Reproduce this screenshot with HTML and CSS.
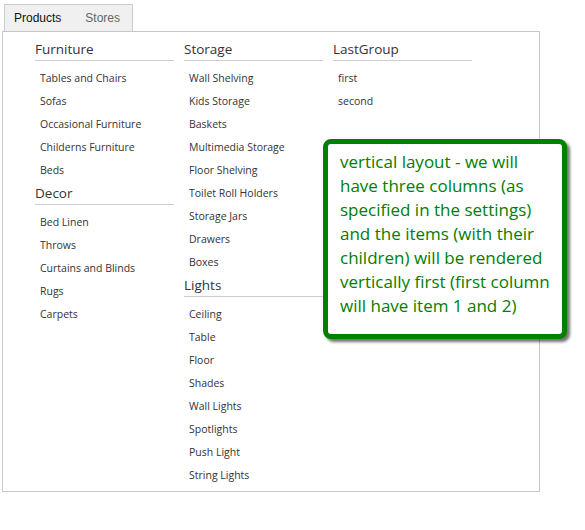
FILE: index.html
```html
<!DOCTYPE html>
<html>
<head>
<meta charset="utf-8">
<link rel="stylesheet" href="styles.css">
</head>
<body>
<div class="page">
  <div class="tabs">
    <div class="tab tab-first active">Products</div>
    <div class="tab-sep"></div>
    <div class="tab">Stores</div>
  </div>
  <div class="panel">
    <div class="col">
      <div class="group">
        <h3 class="group-title">Furniture</h3>
        <ul class="items">
          <li>Tables and Chairs</li>
          <li>Sofas</li>
          <li>Occasional Furniture</li>
          <li>Childerns Furniture</li>
          <li>Beds</li>
        </ul>
      </div>
      <div class="group">
        <h3 class="group-title">Decor</h3>
        <ul class="items">
          <li>Bed Linen</li>
          <li>Throws</li>
          <li>Curtains and Blinds</li>
          <li>Rugs</li>
          <li>Carpets</li>
        </ul>
      </div>
    </div>
    <div class="col">
      <div class="group">
        <h3 class="group-title">Storage</h3>
        <ul class="items">
          <li>Wall Shelving</li>
          <li>Kids Storage</li>
          <li>Baskets</li>
          <li>Multimedia Storage</li>
          <li>Floor Shelving</li>
          <li>Toilet Roll Holders</li>
          <li>Storage Jars</li>
          <li>Drawers</li>
          <li>Boxes</li>
        </ul>
      </div>
      <div class="group">
        <h3 class="group-title">Lights</h3>
        <ul class="items">
          <li>Ceiling</li>
          <li>Table</li>
          <li>Floor</li>
          <li>Shades</li>
          <li>Wall Lights</li>
          <li>Spotlights</li>
          <li>Push Light</li>
          <li>String Lights</li>
        </ul>
      </div>
    </div>
    <div class="col">
      <div class="group">
        <h3 class="group-title">LastGroup</h3>
        <ul class="items">
          <li>first</li>
          <li>second</li>
        </ul>
      </div>
    </div>
  </div>
  <div class="callout">vertical layout - we will<br>have three columns (as<br>specified in the settings)<br>and the items (with their<br>children) will be rendered<br>vertically first (first column<br>will have item 1 and 2)</div>
</div>
</body>
</html>
```

FILE: styles.css
```css
html, body {
  margin: 0;
  padding: 0;
  background: #ffffff;
}

.page {
  position: relative;
  padding: 4px 0 0 2px;
  width: 538px;
}

.tabs {
  display: flex;
  align-items: center;
  margin-left: 2px;
  width: 127px;
  height: 26px;
  background: #f0f0f0;
  border: 1px solid #cccccc;
  border-bottom: none;
  font-family: "Liberation Sans", Arial, sans-serif;
  font-size: 12px;
}

.tab {
  padding: 0 12px 0 13px;
  color: #666666;
  line-height: 26px;
}

.tab-first {
  padding: 0 11px 0 9px;
}

.tab.active {
  color: #111111;
}

.tab-sep {
  width: 1px;
  height: 19px;
  background: #cfcfcf;
}

.panel {
  display: flex;
  gap: 10px;
  border: 1px solid #c6c6c6;
  padding: 8px 0 3px 32px;
  height: 448px;
  font-family: "Open Sans", "Noto Sans", sans-serif;
}

.col {
  width: 139px;
  display: flex;
  flex-direction: column;
  gap: 2px;
}

.group-title {
  margin: 0;
  padding: 0 0 2px 0;
  font-size: 13.5px;
  line-height: 18px;
  font-weight: normal;
  color: #333333;
  border-bottom: 1px solid #cccccc;
}

.items {
  list-style: none;
  margin: 6px 0 0 0;
  padding: 0 0 0 5px;
}

.items li {
  font-size: 10.5px;
  line-height: 23px;
  height: 23px;
  color: #333333;
  white-space: nowrap;
}

.callout {
  position: absolute;
  left: 323px;
  top: 139px;
  width: 222px;
  height: 184px;
  padding: 6px 0 0 12px;
  border: 5px solid #008000;
  border-radius: 8px;
  box-shadow: 3px 3px 3px rgba(0, 0, 0, 0.55);
  background: #ffffff;
  color: #008000;
  font-family: "Open Sans", "Noto Sans", sans-serif;
  font-size: 17px;
  line-height: 24px;
  white-space: nowrap;
}
```
